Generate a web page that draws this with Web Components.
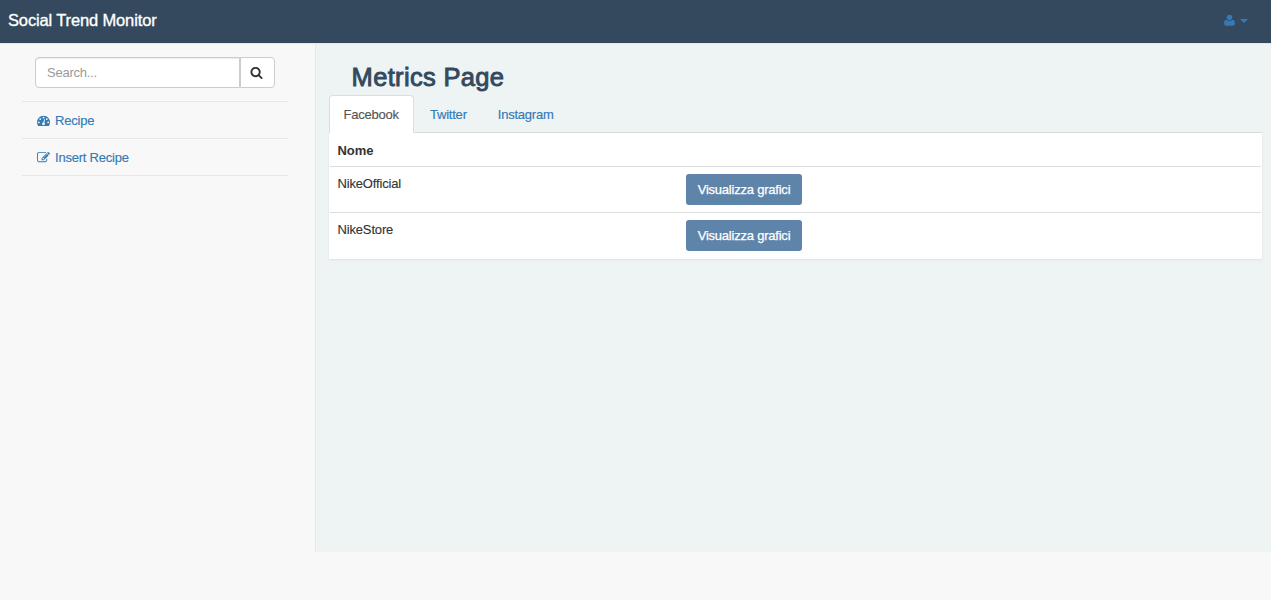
<!DOCTYPE html>
<html lang="it">
<head>
<meta charset="utf-8">
<title>Social Trend Monitor</title>
<style>
html, body { margin: 0; background: #f8f8f8; }
body { font: 13px/18px "Liberation Sans", Arial, sans-serif; color: #333; }
</style>
</head>
<body>
<stm-app></stm-app>
<script>
const define = (name, html) => customElements.define(name, class extends HTMLElement {
  constructor() {
    super();
    const t = document.createElement('template');
    t.innerHTML = '<style>*{box-sizing:border-box}</style>' + html;
    this.attachShadow({ mode: 'open' }).append(t.content.cloneNode(true));
  }
});

const icons = {
  search: 'M1216 832q0-185-131.5-316.5t-316.5-131.5-316.5 131.5-131.5 316.5 131.5 316.5 316.5 131.5 316.5-131.5 131.5-316.5zm512 832q0 52-38 90t-90 38q-54 0-90-38l-343-342q-179 124-399 124-143 0-273.5-55.5t-225-150-150-225-55.5-273.5 55.5-273.5 150-225 225-150 273.5-55.5 273.5 55.5 225 150 150 225 55.5 273.5q0 220-124 399l343 343q37 37 37 90z',
  dashboard: 'M384 1152q0-53-37.5-90.5t-90.5-37.5-90.5 37.5-37.5 90.5 37.5 90.5 90.5 37.5 90.5-37.5 37.5-90.5zm192-448q0-53-37.5-90.5t-90.5-37.5-90.5 37.5-37.5 90.5 37.5 90.5 90.5 37.5 90.5-37.5 37.5-90.5zm428 481l101-382q6-26-7.5-48.5t-38.5-29.5-48 6.5-30 39.5l-101 382q-60 5-107 43.5t-63 98.5q-20 77 20 146t117 89 146-20 89-117q16-60-6-117t-72-91zm660-33q0-53-37.5-90.5t-90.5-37.5-90.5 37.5-37.5 90.5 37.5 90.5 90.5 37.5 90.5-37.5 37.5-90.5zm-640-640q0-53-37.5-90.5t-90.5-37.5-90.5 37.5-37.5 90.5 37.5 90.5 90.5 37.5 90.5-37.5 37.5-90.5zm448 192q0-53-37.5-90.5t-90.5-37.5-90.5 37.5-37.5 90.5 37.5 90.5 90.5 37.5 90.5-37.5 37.5-90.5zm320 448q0 261-141 483-19 29-54 29h-1402q-35 0-54-29-141-221-141-483 0-182 71-348t191-286 286-191 348-71 348 71 286 191 191 286 71 348z',
  edit: 'M888 1184l116-116-152-152-116 116v56h96v96h56zm440-720q-16-16-33 1l-350 350q-17 17-1 33t33-1l350-350q17-17 1-33zm80 594v190q0 119-84.5 203.5t-203.5 84.5h-832q-119 0-203.5-84.5t-84.5-203.5v-832q0-119 84.5-203.5t203.5-84.5h832q63 0 117 25 15 7 18 23 3 17-9 29l-49 49q-14 14-32 8-23-6-45-6h-832q-66 0-113 47t-47 113v832q0 66 47 113t113 47h832q66 0 113-47t47-113v-126q0-13 9-22l64-64q15-15 35-7t20 29zm-96-738l288 288-672 672h-288v-288zm444 132l-92 92-288-288 92-92q28-28 68-28t68 28l152 152q28 28 28 68t-28 68z',
  user: 'M896 110a380 380 0 1 1 0 760a380 380 0 1 1 0-760zM500 800Q700 980 896 980T1292 800Q1640 800 1640 1270Q1640 1610 1400 1610H392Q152 1610 152 1270Q152 800 500 800z'
};

customElements.define('stm-icon', class extends HTMLElement {
  constructor() {
    super();
    this.attachShadow({ mode: 'open' });
  }
  connectedCallback() {
    this.shadowRoot.innerHTML = `<style>:host{display:block;width:13px;height:13px;flex:none}svg{display:block;width:100%;height:100%;fill:currentColor}</style><svg viewBox="0 0 1792 1792"><path d="${icons[this.getAttribute('name')]}"/></svg>`;
  }
});

define('stm-navbar', `<style>
:host{display:flex;justify-content:space-between;align-items:center;height:44px;background:#34495e;border-bottom:1px solid #e7e7e7;padding:0 23px 3px 8px;box-sizing:border-box}
.brand{font-size:16.5px;line-height:20px;color:#fff;-webkit-text-stroke:.35px #fff;letter-spacing:-.14px}
.user{display:flex;align-items:center;gap:4px;color:#337ab7;padding-top:1px}
.caret{border:4px solid transparent;border-top-color:currentColor;border-bottom:0}
</style><div class="brand"><slot></slot></div><div class="user"><stm-icon name="user"></stm-icon><span class="caret"></span></div>`);

define('stm-search', `<style>
:host{display:flex;height:31px;margin:13px 40px 13px 35px}
div{background:#fff;border:1px solid #ccc;display:flex;align-items:center}
.field{flex:1;border-radius:4px 0 0 4px;padding:0 11px;color:#999;box-shadow:inset 0 1px 1px rgba(0,0,0,.075);letter-spacing:-.24px}
.go{width:35px;padding-right:2px;justify-content:center;border-radius:0 4px 4px 0;color:#333}
</style><div class="field"><slot></slot></div><div class="go"><stm-icon name="search"></stm-icon></div>`);

define('stm-link', `<style>
:host{display:flex;align-items:center;gap:5px;height:37px;padding:1px 15px 0;border-bottom:1px solid #e7e7e7;color:#337ab7;box-sizing:border-box;letter-spacing:-.22px;-webkit-text-stroke:.15px}
span{padding-top:1px}
</style><slot name="icon"></slot><span><slot></slot></span>`);

define('stm-sidebar', `<style>
:host{display:flow-root;width:315px;flex:none}
nav{margin:0 27px 0 22px;border-top:1px solid #e7e7e7}
</style><stm-search>Search...</stm-search>
<nav><stm-link><stm-icon slot="icon" name="dashboard"></stm-icon>Recipe</stm-link><stm-link><stm-icon slot="icon" name="edit"></stm-icon>Insert Recipe</stm-link></nav>`);

define('stm-tab', `<style>
:host{display:block;height:37px;line-height:18px;padding:10px 14px 8px 13px;border:1px solid transparent;border-bottom:0;border-radius:4px 4px 0 0;color:#337ab7;margin-right:2px;box-sizing:border-box;letter-spacing:-.22px;-webkit-text-stroke:.15px}
:host([active]){width:85px;padding-left:13.5px;padding-right:0;height:38px;margin-bottom:-1px;background:#fff;border-color:#ddd;color:#555}
</style><slot></slot>`);

define('stm-tabs', `<style>
:host{display:flex;height:38px;border-bottom:1px solid #ddd;box-sizing:border-box}
</style><slot></slot>`);

define('stm-button', `<style>
:host{display:flex;align-items:center;justify-content:center;width:116px;height:31px;border-radius:3px;background:#5e84aa;color:#fff;-webkit-text-stroke:.25px #fff;letter-spacing:-.22px}
</style><slot></slot>`);

define('stm-row', `<style>
:host{display:grid;grid-template-columns:348.5px 1fr;height:46px;padding:7px 8px 7px 7.5px;margin:0 1px;border-bottom:1px solid #ddd;box-sizing:border-box;letter-spacing:-.16px;-webkit-text-stroke:.12px}
span{padding-top:1px}
:host([last]){border-bottom:0}
:host([head]){height:34px;font-weight:bold;padding-top:8px;letter-spacing:-.05px;-webkit-text-stroke:0}
</style><span><slot></slot></span><slot name="action"></slot>`);

define('stm-table', `<style>
:host{display:block;height:126px;background:#fff;box-shadow:0 1px 2px rgba(0,0,0,.08)}
</style><slot></slot>`);

define('stm-app', `<style>
:host{display:block}
main{display:flex;height:508px}
section{flex:1;background:#eef3f4;border-left:1px solid #e7e7e7;padding:17px 9px 0 13px}
h1{font-size:25.5px;line-height:32px;font-weight:normal;margin:0 0 2px 22.6px;color:#34495e;-webkit-text-stroke:.9px #34495e;letter-spacing:.33px}
</style><stm-navbar>Social Trend Monitor</stm-navbar>
<main><stm-sidebar></stm-sidebar><section><h1>Metrics Page</h1>
<stm-tabs><stm-tab active>Facebook</stm-tab><stm-tab>Twitter</stm-tab><stm-tab>Instagram</stm-tab></stm-tabs>
<stm-table><stm-row head>Nome</stm-row>
<stm-row>NikeOfficial<stm-button slot="action">Visualizza grafici</stm-button></stm-row>
<stm-row last>NikeStore<stm-button slot="action">Visualizza grafici</stm-button></stm-row></stm-table>
</section></main>`);
</script>
</body>
</html>
